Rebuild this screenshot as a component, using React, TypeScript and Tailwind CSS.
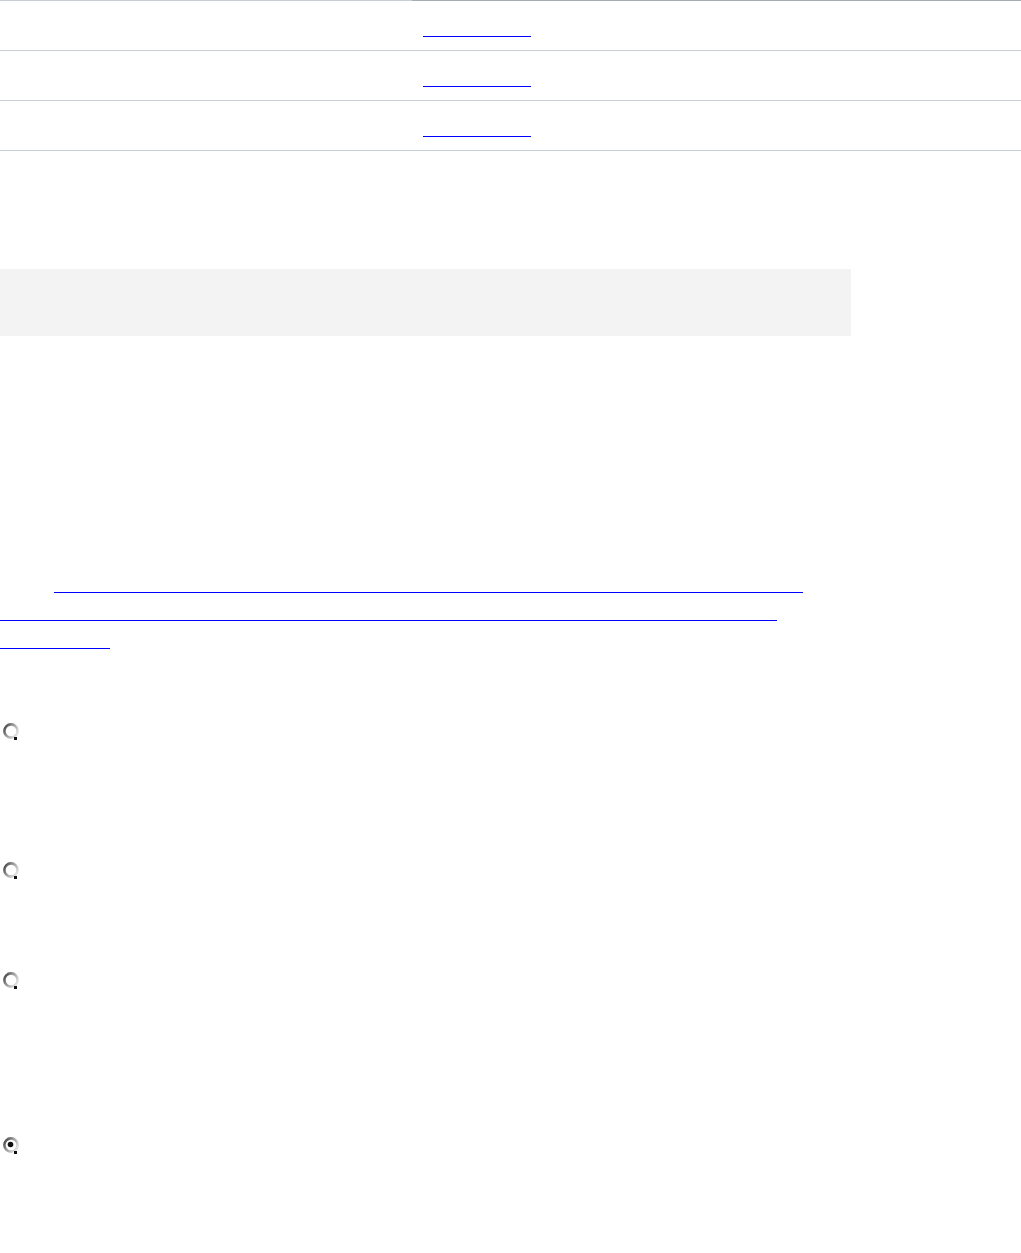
import React from 'react';

const Radio: React.FC<{ id: string; checked?: boolean }> = ({ id, checked }) => (
  <svg width="18" height="18" viewBox="0 0 18 18" className="ml-[2px] block">
    <defs>
      <linearGradient id={id} x1="0" y1="0" x2="1" y2="0.6">
        <stop offset="0" stopColor="#3a3a3a" />
        <stop offset="0.5" stopColor="#9a9a9a" />
        <stop offset="1" stopColor="#e0e0e0" />
      </linearGradient>
    </defs>
    <circle cx="9" cy="9" r="6.6" fill="#ffffff" stroke={`url(#${id})`} strokeWidth="2.6" />
    <rect x="12" y="15" width="3" height="3" fill="#111111" />
    {checked && <circle cx="8.5" cy="8.5" r="2.8" fill="#111111" />}
  </svg>
);

const rows = [0, 1, 2];

const App: React.FC = () => {
  return (
    <div className="w-[1021px] min-h-[1253px] bg-white font-['Liberation_Sans',Arial,sans-serif] text-[13px] text-transparent">
      {/* table */}
      <div className="flex h-px">
        <div className="w-[412px] bg-[#c9cfd4]" />
        <div className="flex-1 bg-[#a5acb3]" />
      </div>
      {rows.map((r) => (
        <div key={r} className="flex h-[50px] border-b border-[#c9cfd4]">
          <div className="w-[412px]" />
          <div className="flex-1 pl-[11px] pt-[35px]">
            <a href="#" className="block w-[108px] h-px bg-[#0000ff]" />
          </div>
        </div>
      ))}

      {/* grey panel */}
      <div className="mt-[118px] w-[851px] h-[67px] bg-[#f3f3f3]" />

      {/* link paragraph */}
      <div className="mt-[235px]">
        <div className="h-[28px] pl-[54px] pt-[21px]">
          <a href="#" className="block w-[749px] h-px bg-[#0000ff]" />
        </div>
        <div className="h-[28px] pt-[21px]">
          <a href="#" className="block w-[777px] h-px bg-[#0000ff]" />
        </div>
        <div className="h-[28px] pt-[21px]">
          <a href="#" className="block w-[110px] h-px bg-[#0000ff]" />
        </div>
      </div>

      {/* options */}
      <div className="mt-[67px]">
        <Radio id="r1" />
      </div>
      <div className="mt-[121px]">
        <Radio id="r2" />
      </div>
      <div className="mt-[92px]">
        <Radio id="r3" />
      </div>
      <div className="mt-[147px]">
        <Radio id="r4" checked />
      </div>
    </div>
  );
};

export default App;
